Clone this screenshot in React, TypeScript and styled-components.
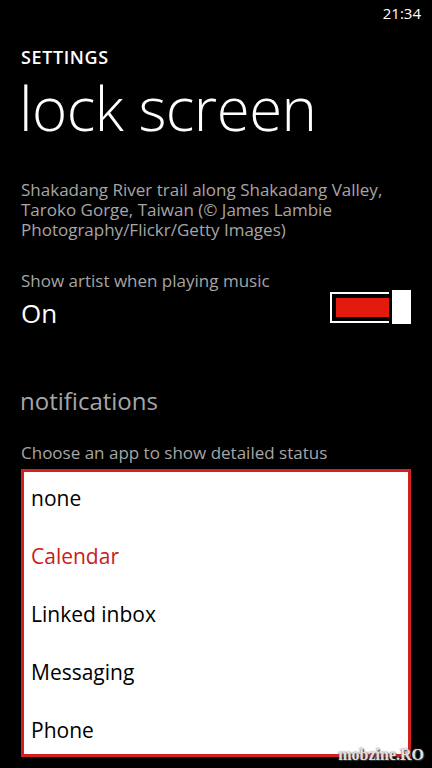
import React from "react";
import styled, {createGlobalStyle} from "styled-components";

const GlobalStyle = createGlobalStyle`
  html, body {
    margin: 0;
    padding: 0;
    background: #000;
  }
  body {
    font-family: "Open Sans", "Noto Sans", sans-serif;
    color: #fff;
  }
`;

const Screen = styled.div`
  position: relative;
  width: 432px;
  height: 768px;
  overflow: hidden;
  background: #000;
  display: flex;
  flex-direction: column;
`;

const StatusBar = styled.div`
  display: flex;
  justify-content: flex-end;
  height: 28px;
  padding: 0 11px 0 0;
  font-size: 15px;
  line-height: 26px;
  color: #fff;
`;

const Content = styled.div`
  display: flex;
  flex-direction: column;
  padding: 0 21px;
`;

const PageKicker = styled.div`
  font-size: 18px;
  font-weight: 600;
  line-height: 22px;
  margin-top: 18px;
  letter-spacing: 0.6px;
`;

const PageTitle = styled.h1`
  margin: 0 0 0 -2px;
  font-size: 60px;
  font-weight: 300;
  line-height: 80px;
  letter-spacing: -0.5px;
`;

const Caption = styled.p`
  margin: 32px 0 0;
  font-size: 17px;
  line-height: 20px;
  color: #a6a6a6;
`;

const Label = styled.div<{$top: number}>`
  margin-top: ${p => p.$top}px;
  font-size: 17px;
  line-height: 20px;
  color: #a6a6a6;
`;

const ToggleRow = styled.div`
  display: flex;
  justify-content: space-between;
  align-items: flex-start;
  margin-top: 4px;
`;

const ToggleValue = styled.span`
  font-size: 26px;
  line-height: 36px;
  color: #fff;
`;

const Switch = styled.div`
  display: flex;
  align-items: center;
  gap: 3px;
  margin-top: -5px;
`;

const SwitchTrack = styled.div`
  box-sizing: border-box;
  display: flex;
  width: 59px;
  height: 31px;
  border: 2px solid #fff;
  border-right: none;
  padding: 4px 0 4px 4px;
`;

const SwitchFill = styled.div`
  flex: 1;
  background: #e31a0e;
`;

const SwitchThumb = styled.div`
  width: 19px;
  height: 34px;
  background: #fff;
`;

const SectionTitle = styled.h2`
  margin: 53px 0 0 -1px;
  font-size: 24px;
  font-weight: 400;
  line-height: 34px;
  color: #a6a6a6;
`;

const Picker = styled.ul`
  box-sizing: border-box;
  list-style: none;
  height: 288px;
  margin: 6px 0 0;
  padding: 0;
  overflow: hidden;
  background: #fff;
  border: 3px solid #d3201c;
`;

const PickerItem = styled.li<{$selected?: boolean}>`
  height: 58px;
  padding-left: 7px;
  font-size: 21px;
  line-height: 52px;
  color: ${p => (p.$selected ? "#c8201a" : "#000")};
`;

const Watermark = styled.div`
  position: absolute;
  right: 8px;
  bottom: 4px;
  font-family: "Liberation Serif", serif;
  font-weight: 700;
  font-size: 16px;
  color: #e0e0e0;
  text-shadow: 0 0 2px #555, 1px 1px 1px #333;
`;

const apps = ["none", "Calendar", "Linked inbox", "Messaging", "Phone"];

export default function App() {
  return (
    <Screen>
      <GlobalStyle/>
      <StatusBar>21:34</StatusBar>
      <Content>
        <PageKicker>SETTINGS</PageKicker>
        <PageTitle>lock screen</PageTitle>
        <Caption>
          Shakadang River trail along Shakadang Valley, Taroko Gorge, Taiwan (© James Lambie
          Photography/Flickr/Getty Images)
        </Caption>
        <Label $top={31}>Show artist when playing music</Label>
        <ToggleRow>
          <ToggleValue>On</ToggleValue>
          <Switch>
            <SwitchTrack>
              <SwitchFill/>
            </SwitchTrack>
            <SwitchThumb/>
          </Switch>
        </ToggleRow>
        <SectionTitle>notifications</SectionTitle>
        <Label $top={25}>Choose an app to show detailed status</Label>
        <Picker>
          {apps.map(app => (
            <PickerItem key={app} $selected={app === "Calendar"}>{app}</PickerItem>
          ))}
        </Picker>
      </Content>
      <Watermark>mobzine.RO</Watermark>
    </Screen>
  );
}
